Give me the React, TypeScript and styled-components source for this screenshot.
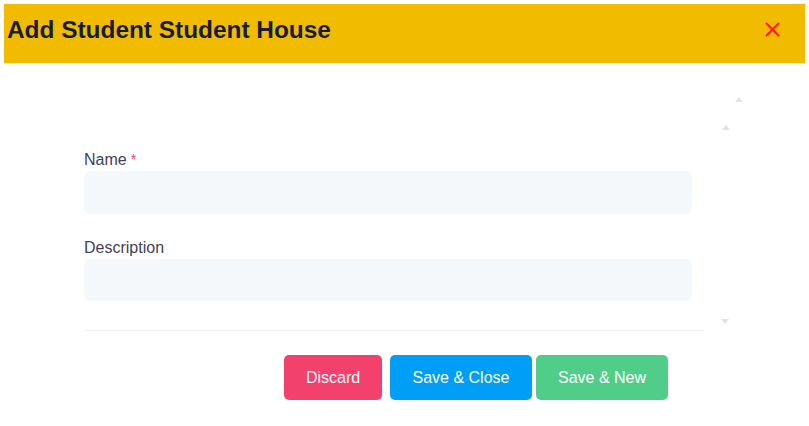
import React from 'react';
import styled, { createGlobalStyle } from 'styled-components';

const GlobalStyle = createGlobalStyle`
  body {
    margin: 0;
    background: #ffffff;
    font-family: "Liberation Sans", Arial, sans-serif;
  }
`;

const Modal = styled.div`
  margin: 4px;
  width: 801px;
`;

const Header = styled.div`
  height: 59px;
  box-sizing: border-box;
  padding: 0 25px 8px 3px;
  background: #f1bc00;
  display: flex;
  align-items: center;
  justify-content: space-between;
`;

const Title = styled.h2`
  margin: 0;
  font-size: 24.4px;
  font-weight: 700;
  color: #181c32;
`;

const CloseButton = styled.button`
  border: none;
  background: none;
  padding: 0;
  width: 15px;
  height: 15px;
  display: flex;
  cursor: pointer;
`;

const Body = styled.div`
  position: relative;
  padding: 87px 0 0 80px;
`;

const Arrow = styled.span<{ $down?: boolean; $x: number; $y: number }>`
  position: absolute;
  left: ${(p) => p.$x}px;
  top: ${(p) => p.$y}px;
  width: 0;
  height: 0;
  border-left: 4.5px solid transparent;
  border-right: 4.5px solid transparent;
  ${(p) =>
    p.$down
      ? 'border-top: 5px solid #dfe2ea;'
      : 'border-bottom: 5px solid #dfe2ea;'}
`;

const Form = styled.div`
  width: 608px;
  display: flex;
  flex-direction: column;
  gap: 24px;
`;

const Field = styled.div`
  display: flex;
  flex-direction: column;
`;

const Label = styled.label`
  font-size: 16px;
  line-height: 20px;
  color: #3f4254;
  margin-bottom: 1px;
`;

const Required = styled.span`
  color: #f1416c;
  font-size: 14px;
  margin-left: 4px;
  vertical-align: top;
  position: relative;
  top: -1px;
`;

const Input = styled.input<{ $h: number }>`
  height: ${(p) => p.$h}px;
  box-sizing: border-box;
  border: none;
  border-radius: 6px;
  background: #f5f8fa;
  padding: 0 14px;
  font-size: 16px;
  font-family: inherit;
  outline: none;
`;

const Divider = styled.hr`
  width: 620px;
  margin: 29px 0 0;
  border: none;
  border-top: 1px solid #eff2f5;
`;

const Footer = styled.div`
  width: 620px;
  box-sizing: border-box;
  padding: 24px 36px 0 0;
  display: flex;
  justify-content: flex-end;
`;

const Button = styled.button<{ $bg: string; $w: number; $gap: number }>`
  width: ${(p) => p.$w}px;
  height: 45px;
  margin-left: ${(p) => p.$gap}px;
  padding-top: 2px;
  border: none;
  border-radius: 5px;
  background: ${(p) => p.$bg};
  color: #ffffff;
  font-family: inherit;
  font-size: 16px;
  cursor: pointer;
`;

const App: React.FC = () => {
  return (
    <>
      <GlobalStyle />
      <Modal>
        <Header>
          <Title>Add Student Student House</Title>
          <CloseButton aria-label="close">
            <svg width="15" height="15" viewBox="0 0 15 15">
              <path d="M1 1 L14 14 M14 1 L1 14" stroke="#ff1a00" strokeWidth="2" />
            </svg>
          </CloseButton>
        </Header>
        <Body>
          <Arrow $x={731} $y={34} />
          <Arrow $x={718} $y={62} />
          <Arrow $x={717} $down $y={256} />
          <Form>
            <Field>
              <Label>
                Name<Required>*</Required>
              </Label>
              <Input $h={43} />
            </Field>
            <Field>
              <Label>Description</Label>
              <Input $h={42} />
            </Field>
          </Form>
          <Divider />
          <Footer>
            <Button $bg="#f1416c" $w={98} $gap={0}>Discard</Button>
            <Button $bg="#009ef7" $w={142} $gap={8}>Save &amp; Close</Button>
            <Button $bg="#50cd89" $w={132} $gap={4}>Save &amp; New</Button>
          </Footer>
        </Body>
      </Modal>
    </>
  );
};

export default App;
